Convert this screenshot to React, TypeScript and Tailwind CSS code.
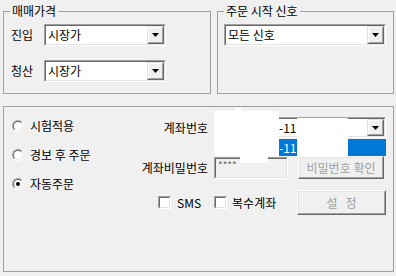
import React from "react";

const Arrow = () => (
  <svg width="7" height="4" viewBox="0 0 7 4">
    <polygon points="0,0 7,0 3.5,4" fill="#000" />
  </svg>
);

// raised 3d button used in the combo boxes
const DropButton = () => (
  <div className="w-[17px] h-full border border-t-[#e3e3e3] border-l-[#e3e3e3] border-b-[#696969] border-r-[#696969]">
    <div className="w-full h-full flex items-center justify-center bg-[#f0f0f0] border border-t-white border-l-white border-b-[#a0a0a0] border-r-[#a0a0a0]">
      <Arrow />
    </div>
  </div>
);

const Combo = ({ className, children }: { className: string; children: React.ReactNode }) => (
  <div className={`${className} flex border border-t-[#a0a0a0] border-l-[#a0a0a0] border-b-white border-r-white`}>
    <div className="flex flex-1 bg-white border border-t-[#696969] border-l-[#696969] border-b-[#e3e3e3] border-r-[#e3e3e3]">
      <div className="flex-1 flex items-center pl-[2px] leading-[14px]">{children}</div>
      <DropButton />
    </div>
  </div>
);

const Button = ({ className, label }: { className: string; label: string }) => (
  <div className={`${className} border border-t-white border-l-white border-b-[#696969] border-r-[#696969]`}>
    <div className="w-full h-full flex items-center justify-center bg-[#f0f0f0] border border-t-[#e3e3e3] border-l-[#e3e3e3] border-b-[#a0a0a0] border-r-[#a0a0a0] text-[#a0a0a0] whitespace-pre leading-[14px]">
      {label}
    </div>
  </div>
);

const Radio = ({ label, checked }: { label: string; checked?: boolean }) => (
  <div className="h-[29px] flex items-center gap-[6px]">
    <div className="w-[12px] h-[12px] rounded-full border border-t-[#a0a0a0] border-l-[#a0a0a0] border-b-white border-r-white">
      <div className="w-full h-full rounded-full bg-white flex items-center justify-center border border-t-[#696969] border-l-[#696969] border-b-[#e3e3e3] border-r-[#e3e3e3]">
        {checked && <div className="w-[4px] h-[4px] rounded-full bg-black" />}
      </div>
    </div>
    <span className="leading-[14px]">{label}</span>
  </div>
);

const Check = () => (
  <div className="w-[13px] h-[13px] border border-t-[#a0a0a0] border-l-[#a0a0a0] border-b-white border-r-white">
    <div className="w-full h-full bg-white border border-t-[#696969] border-l-[#696969] border-b-[#e3e3e3] border-r-[#e3e3e3]" />
  </div>
);

export default function App() {
  return (
    <div className="relative w-[396px] h-[276px] overflow-hidden bg-[#f0f0f0] text-[12px] text-black font-['Noto_Sans_CJK_KR',sans-serif]">
      {/* top groups */}
      <div className="flex gap-[6px] pt-[4px] pl-[3px]">
        <fieldset className="w-[208px] h-[90px] p-0 m-0 border border-[#a0a0a0]">
          <legend className="ml-[6px] px-[2px] leading-[14px]">매매가격</legend>
          <div className="mt-[6px] flex items-center">
            <span className="w-[40px] pl-[7px] leading-[14px]">진입</span>
            <Combo className="w-[122px] h-[22px]">시장가</Combo>
          </div>
          <div className="mt-[14px] flex items-center">
            <span className="w-[40px] pl-[7px] leading-[14px]">청산</span>
            <Combo className="w-[122px] h-[22px]">시장가</Combo>
          </div>
        </fieldset>
        <fieldset className="w-[177px] h-[90px] p-0 m-0 border border-[#a0a0a0]">
          <legend className="ml-[6px] px-[2px] leading-[14px]">주문 시작 신호</legend>
          <div className="mt-[6px] ml-[6px]">
            <Combo className="w-[162px] h-[22px]">모든 신호</Combo>
          </div>
        </fieldset>
      </div>

      {/* order settings */}
      <fieldset className="mt-[12px] ml-[3px] w-[391px] h-[166px] p-0 border border-[#a0a0a0] flex">
        <div className="flex">
          <div className="w-[130px] pt-[4px] pl-[8px] flex flex-col">
            <Radio label="시험적용" />
            <Radio label="경보 후 주문" />
            <Radio label="자동주문" checked />
          </div>
          <div className="w-[252px] pt-[10px] flex flex-col">
            <div className="flex items-center">
              <span className="w-[74px] text-right leading-[14px]">계좌번호</span>
              <div className="relative ml-[6px]">
                <Combo className="w-[172px] h-[21px]">
                  <span className="pl-[61px]">-11</span>
                </Combo>
                {/* open list */}
                <div className="absolute left-0 top-full mt-[1px] w-full h-[17px] bg-[#0078d7] text-white flex items-center leading-[14px]">
                  <span className="pl-[65px]">-11</span>
                </div>
              </div>
            </div>
            <div className="mt-[18px] flex items-center">
              <span className="w-[74px] text-right leading-[14px]">계좌비밀번호</span>
              <div className="ml-[6px] w-[74px] h-[22px] border border-t-[#a0a0a0] border-l-[#a0a0a0] border-b-white border-r-white">
                <div className="w-full h-full bg-[#f0f0f0] border border-t-[#696969] border-l-[#696969] border-b-[#e3e3e3] border-r-[#e3e3e3] pl-[2px] text-[10px] leading-[12px] text-[#6d6d6d]">
                  ****
                </div>
              </div>
              <Button className="ml-[10px] w-[86px] h-[23px]" label="비밀번호 확인" />
            </div>
            <div className="mt-[11px] pl-[24px] flex items-center">
              <Check />
              <span className="ml-[6px] leading-[14px]">SMS</span>
              <div className="ml-[13px]">
                <Check />
              </div>
              <span className="ml-[5px] leading-[14px]">복수계좌</span>
              <Button className="ml-auto w-[89px] h-[25px]" label="설   정" />
            </div>
          </div>
        </div>
      </fieldset>

      {/* redacted account number */}
      <div className="absolute left-[214px] top-[111px] w-[65px] h-[45px] bg-white" />
      <div className="absolute left-[235px] top-[108px] w-[6px] h-[3px] bg-white" />
      <div className="absolute left-[240px] top-[155px] w-[28px] h-[8px] bg-white" />
      <div className="absolute left-[297px] top-[118px] w-[51px] h-[38px] bg-white" />
    </div>
  );
}
